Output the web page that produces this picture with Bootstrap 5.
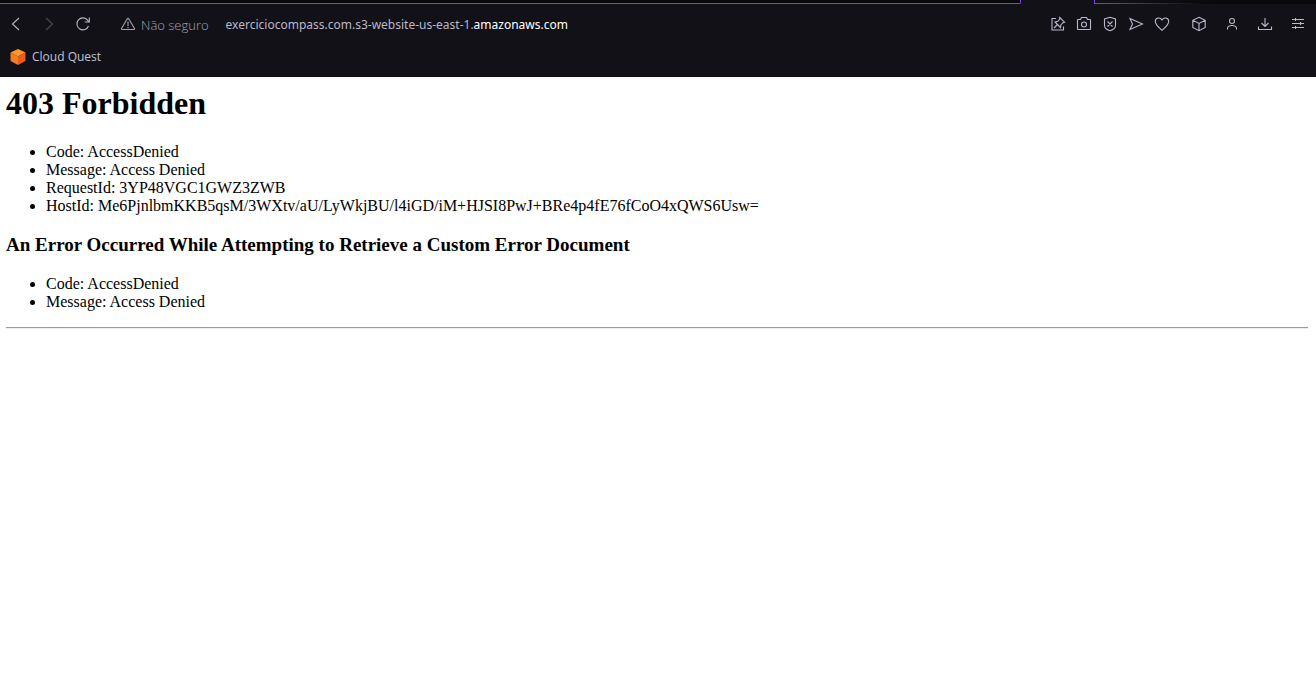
<!DOCTYPE html>
<html lang="pt-BR">
<head>
<meta charset="utf-8">
<meta name="viewport" content="width=device-width, initial-scale=1">
<title>403 Forbidden</title>
<link href="https://cdn.jsdelivr.net/npm/bootstrap@5.3.0/dist/css/bootstrap.min.css" rel="stylesheet">
<style>
  body { background: #fff; color: #000; font-family: "Liberation Serif", serif; font-size: 16px; line-height: 18px; }
  .browser { background: #121117; color: #b9b7ca; font-family: "Noto Sans", "Open Sans", sans-serif; font-size: 12px; padding-bottom: 7px; }
  .tab-strip { height: 4px; }
  .tabs-left { background: #09090b; border-bottom: 1px solid #7a42e8; border-right: 1px solid #7a42e8; border-bottom-right-radius: 2px; }
  .tab-current { width: 73px; }
  .tabs-right { width: 222px; border-left: 1px solid #7a42e8; background: linear-gradient(90deg, #7a42e8, #09090b 50%) bottom / 100% 1px no-repeat, linear-gradient(90deg, #121117, #09090b 60%); }
  .toolbar { height: 40px; padding-right: 2px; }
  .tool { width: 33px; height: 32px; padding: 0; border: 0; background: none; color: inherit; display: flex; align-items: center; justify-content: center; }
  .tool:disabled { color: #4c4b55; }
  .tool.narrow { width: 26px; }
  .tool svg, .warning { width: 16px; height: 16px; flex: none; }
  .page-tools { margin-right: 7px; }
  svg { fill: none; stroke: currentColor; stroke-width: 1.1; }
  .site-info { margin-left: 21px; margin-right: 17px; padding: 0; border: 0; background: none; color: #a3a1b1; gap: 5px; font-family: "Open Sans", sans-serif; font-size: 13px; font-weight: 300; line-height: 20px; }
  .site-info span, .address { padding-top: 2px; }
  .address { line-height: 20px; outline: 0; }
  .address strong { color: #fff; font-weight: 400; }
  .bookmarks { height: 26px; padding-left: 9px; }
  .bookmarks a { color: #c3c1d4; gap: 5px; font-family: "Open Sans", sans-serif; }
  .bookmarks svg { width: 18px; height: 18px; stroke: none; }
  .error-page { padding: 8px 8px 8px 6px; }
  .error-page h1 { font-size: 32px; line-height: 37px; font-weight: 700; margin: 0 0 21px; }
  .error-page h2 { font-size: 19px; line-height: 21px; font-weight: 700; margin: 0 0 20px; }
  .error-page ul { padding-left: 40px; margin: 0 0 19px; }
  .error-page hr { margin: -3px 0 0; border: 0; border-top: 1px solid #9a9a9a; border-bottom: 1px solid #eee; opacity: 1; }
</style>
</head>
<body>
<header class="browser">
  <div class="tab-strip d-flex">
    <div class="tabs-left flex-grow-1"></div>
    <div class="tab-current"></div>
    <div class="tabs-right"></div>
  </div>
  <nav class="toolbar d-flex align-items-center" aria-label="Navegação">
    <button class="tool" type="button" aria-label="Voltar"><svg viewBox="0 0 16 16" stroke-width="1.4"><path d="M10 2 3.500 8 10 14"/></svg></button>
    <button class="tool" type="button" aria-label="Avançar" disabled><svg viewBox="0 0 16 16"><path d="M4 2 10.500 8 4 14"/></svg></button>
    <button class="tool" type="button" aria-label="Recarregar"><svg viewBox="0 0 16 16"><path d="M13.500 10A6 6 0 1 1 12.700 4.300L14 5.800M14.300 1.500V6H9.800"/></svg></button>
    <button class="site-info d-flex align-items-center" type="button">
      <svg class="warning" viewBox="0 0 16 16"><path d="M7.300 2.800 1.500 12.500Q1.100 13.500 2.200 13.500H13.800Q14.900 13.500 14.500 12.500L8.700 2.800Q8 1.900 7.300 2.800ZM8 5.500V10M8 11V12.300"/></svg>
      <span>Não seguro</span>
    </button>
    <div class="address flex-grow-1 text-nowrap" role="textbox" contenteditable="true" spellcheck="false" aria-label="Endereço">exerciciocompass.com.s3-website-us-east-1.<strong>amazonaws.com</strong></div>
    <div class="page-tools d-flex">
      <button class="tool narrow" type="button" aria-label="Editar página"><svg viewBox="0 0 16 16"><path d="M6 2.500H2V14H13.500V10.500M9.800 1.500 14.500 6.200 13 6.700 11 8.700 10.500 11.500 5 6 7.800 5.300 9.600 3.300ZM7.500 8.500 4 12"/></svg></button>
      <button class="tool narrow" type="button" aria-label="Captura de tela"><svg viewBox="0 0 16 16"><path d="M2 3.500H4.500L5.500 1.500H10.500L11.500 3.500H14Q14.500 3.500 14.500 4V13Q14.500 13.500 14 13.500H2Q1.500 13.500 1.500 13V4Q1.500 3.500 2 3.500Z"/><circle cx="8" cy="8.500" r="2.500"/></svg></button>
      <button class="tool narrow" type="button" aria-label="Bloqueador de anúncios"><svg viewBox="0 0 16 16"><path d="M8 1.300 13.500 3V9.500Q13.500 13 8 14.700 2.500 13 2.500 9.500V3ZM5.500 5.500 10.500 10.500M10.500 5.500 5.500 10.500"/></svg></button>
      <button class="tool narrow" type="button" aria-label="Meu fluxo"><svg viewBox="0 0 16 16"><path d="M2 2.500 14.500 8 2 13.500 4.500 8Z"/></svg></button>
      <button class="tool narrow" type="button" aria-label="Favoritar"><svg viewBox="0 0 16 16"><path d="M8 14.300C3.500 10.500 1.300 8.500 1.300 5.500 1.300 1.500 6.200.8 8 4 9.800.8 14.700 1.500 14.700 5.500 14.700 8.500 12.500 10.500 8 14.300Z"/></svg></button>
    </div>
    <div class="d-flex">
      <button class="tool" type="button" aria-label="Extensões"><svg viewBox="0 0 16 16"><path d="M8 1.300 14.200 4.300V11.500L8 14.700 1.800 11.500V4.300ZM1.800 4.300 8 7.500 14.200 4.300M8 7.500V14.700"/></svg></button>
      <button class="tool" type="button" aria-label="Perfil"><svg viewBox="0 0 16 16"><circle cx="8" cy="5" r="2.500"/><path d="M3.500 13.500V12.500Q3.500 9.500 8 9.500T12.500 12.500V13.500"/></svg></button>
      <button class="tool" type="button" aria-label="Downloads"><svg viewBox="0 0 16 16"><path d="M8 2V10M4.500 7 8 10.500 11.500 7M1.500 10.500V13.500H14.500V10.500"/></svg></button>
      <button class="tool" type="button" aria-label="Configuração fácil"><svg viewBox="0 0 16 16"><path d="M2 3.500H14M2 7.500H14M2 11.500H14M5.500 2V5M10.500 6V9M5.500 10V13"/></svg></button>
    </div>
  </nav>
  <nav class="bookmarks d-flex align-items-center" aria-label="Favoritos">
    <a class="d-flex align-items-center text-decoration-none" href="#">
      <svg viewBox="0 0 18 18"><path fill="#fc9a28" d="M9 1 16.500 4.500 9 8.500 1.500 4.500Z"/><path fill="#f47d20" d="M1.500 4.500 9 8.500V17L1.500 13Z"/><path fill="#ea5b1c" d="M16.500 4.500 9 8.500V17L16.500 13Z"/></svg>
      <span>Cloud Quest</span>
    </a>
  </nav>
</header>
<main class="error-page">
  <h1>403 Forbidden</h1>
  <ul>
    <li>Code: AccessDenied</li>
    <li>Message: Access Denied</li>
    <li>RequestId: 3YP48VGC1GWZ3ZWB</li>
    <li>HostId: Me6PjnlbmKKB5qsM/3WXtv/aU/LyWkjBU/l4iGD/iM+HJSI8PwJ+BRe4p4fE76fCoO4xQWS6Usw=</li>
  </ul>
  <h2>An Error Occurred While Attempting to Retrieve a Custom Error Document</h2>
  <ul>
    <li>Code: AccessDenied</li>
    <li>Message: Access Denied</li>
  </ul>
  <hr>
</main>
<script src="https://cdn.jsdelivr.net/npm/bootstrap@5.3.0/dist/js/bootstrap.bundle.min.js"></script>
</body>
</html>
